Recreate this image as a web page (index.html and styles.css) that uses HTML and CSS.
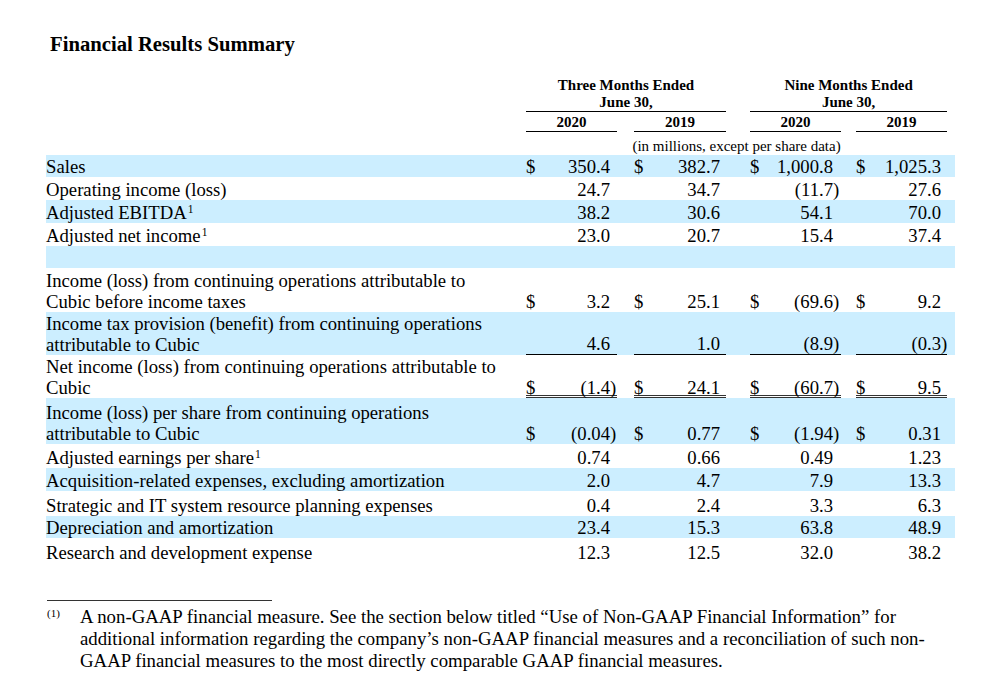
FILE: index.html
```html
<!DOCTYPE html>
<html lang="en">
<head>
<meta charset="utf-8">
<title>Financial Results Summary</title>
<link rel="stylesheet" href="styles.css">
</head>
<body>
<div class="page">
  <h1 class="title">Financial Results Summary</h1>
  <table class="fin">
    <colgroup>
      <col class="w-label">
      <col class="w-dol"><col class="w-n1"><col class="w-p7">
      <col class="w-g1">
      <col class="w-dol"><col class="w-n2"><col class="w-p6">
      <col class="w-g2">
      <col class="w-dol"><col class="w-n3"><col class="w-p8">
      <col class="w-g3">
      <col class="w-dol"><col class="w-n4"><col class="w-p6">
      <col class="w-end">
    </colgroup>
    <thead>
      <tr class="h-a">
        <th></th>
        <th colspan="7" class="hd ul">Three Months Ended<br>June 30,</th>
        <th></th>
        <th colspan="7" class="hd ul">Nine Months Ended<br>June 30,</th>
        <th></th>
      </tr>
      <tr class="h-b">
        <th></th>
        <th colspan="3" class="hd ul">2020</th>
        <th></th>
        <th colspan="3" class="hd ul">2019</th>
        <th></th>
        <th colspan="3" class="hd ul">2020</th>
        <th></th>
        <th colspan="3" class="hd ul">2019</th>
        <th></th>
      </tr>
      <tr class="h-c">
        <th></th>
        <th colspan="15" class="unit">(in millions, except per share data)</th>
        <th></th>
      </tr>
    </thead>
    <tbody>
      <tr class="band r22">
        <td class="lbl">Sales</td>
        <td class="dol">$</td><td class="num">350.4</td><td class="par"></td><td></td>
        <td class="dol">$</td><td class="num">382.7</td><td class="par"></td><td></td>
        <td class="dol">$</td><td class="num">1,000.8</td><td class="par"></td><td></td>
        <td class="dol">$</td><td class="num">1,025.3</td><td class="par"></td><td></td>
      </tr>
      <tr class="r23">
        <td class="lbl">Operating income (loss)</td>
        <td class="dol"></td><td class="num">24.7</td><td class="par"></td><td></td>
        <td class="dol"></td><td class="num">34.7</td><td class="par"></td><td></td>
        <td class="dol"></td><td class="num">(11.7</td><td class="par">)</td><td></td>
        <td class="dol"></td><td class="num">27.6</td><td class="par"></td><td></td>
      </tr>
      <tr class="band r23">
        <td class="lbl">Adjusted EBITDA<sup class="fn">1</sup></td>
        <td class="dol"></td><td class="num">38.2</td><td class="par"></td><td></td>
        <td class="dol"></td><td class="num">30.6</td><td class="par"></td><td></td>
        <td class="dol"></td><td class="num">54.1</td><td class="par"></td><td></td>
        <td class="dol"></td><td class="num">70.0</td><td class="par"></td><td></td>
      </tr>
      <tr class="r23">
        <td class="lbl">Adjusted net income<sup class="fn">1</sup></td>
        <td class="dol"></td><td class="num">23.0</td><td class="par"></td><td></td>
        <td class="dol"></td><td class="num">20.7</td><td class="par"></td><td></td>
        <td class="dol"></td><td class="num">15.4</td><td class="par"></td><td></td>
        <td class="dol"></td><td class="num">37.4</td><td class="par"></td><td></td>
      </tr>
      <tr class="band r22">
        <td class="lbl"></td>
        <td colspan="16"></td>
      </tr>
      <tr class="r44">
        <td class="lbl">Income (loss) from continuing operations attributable to<br>Cubic before income taxes</td>
        <td class="dol">$</td><td class="num">3.2</td><td class="par"></td><td></td>
        <td class="dol">$</td><td class="num">25.1</td><td class="par"></td><td></td>
        <td class="dol">$</td><td class="num">(69.6</td><td class="par">)</td><td></td>
        <td class="dol">$</td><td class="num">9.2</td><td class="par"></td><td></td>
      </tr>
      <tr class="band r43">
        <td class="lbl">Income tax provision (benefit) from continuing operations<br>attributable to Cubic</td>
        <td class="dol u1"></td><td class="num u1">4.6</td><td class="par u1"></td><td></td>
        <td class="dol u1"></td><td class="num u1">1.0</td><td class="par u1"></td><td></td>
        <td class="dol u1"></td><td class="num u1">(8.9</td><td class="par u1">)</td><td></td>
        <td class="dol u1"></td><td class="num u1">(0.3</td><td class="par u1">)</td><td></td>
      </tr>
      <tr class="r43">
        <td class="lbl">Net income (loss) from continuing operations attributable to<br>Cubic</td>
        <td class="dol u2">$</td><td class="num u2">(1.4</td><td class="par u2">)</td><td></td>
        <td class="dol u2">$</td><td class="num u2">24.1</td><td class="par u2"></td><td></td>
        <td class="dol u2">$</td><td class="num u2">(60.7</td><td class="par u2">)</td><td></td>
        <td class="dol u2">$</td><td class="num u2">9.5</td><td class="par u2"></td><td></td>
      </tr>
      <tr class="band r46">
        <td class="lbl">Income (loss) per share from continuing operations<br>attributable to Cubic</td>
        <td class="dol">$</td><td class="num">(0.04</td><td class="par">)</td><td></td>
        <td class="dol">$</td><td class="num">0.77</td><td class="par"></td><td></td>
        <td class="dol">$</td><td class="num">(1.94</td><td class="par">)</td><td></td>
        <td class="dol">$</td><td class="num">0.31</td><td class="par"></td><td></td>
      </tr>
      <tr class="r24">
        <td class="lbl">Adjusted earnings per share<sup class="fn">1</sup></td>
        <td class="dol"></td><td class="num">0.74</td><td class="par"></td><td></td>
        <td class="dol"></td><td class="num">0.66</td><td class="par"></td><td></td>
        <td class="dol"></td><td class="num">0.49</td><td class="par"></td><td></td>
        <td class="dol"></td><td class="num">1.23</td><td class="par"></td><td></td>
      </tr>
      <tr class="band r23">
        <td class="lbl">Acquisition-related expenses, excluding amortization</td>
        <td class="dol"></td><td class="num">2.0</td><td class="par"></td><td></td>
        <td class="dol"></td><td class="num">4.7</td><td class="par"></td><td></td>
        <td class="dol"></td><td class="num">7.9</td><td class="par"></td><td></td>
        <td class="dol"></td><td class="num">13.3</td><td class="par"></td><td></td>
      </tr>
      <tr class="r25">
        <td class="lbl">Strategic and IT system resource planning expenses</td>
        <td class="dol"></td><td class="num">0.4</td><td class="par"></td><td></td>
        <td class="dol"></td><td class="num">2.4</td><td class="par"></td><td></td>
        <td class="dol"></td><td class="num">3.3</td><td class="par"></td><td></td>
        <td class="dol"></td><td class="num">6.3</td><td class="par"></td><td></td>
      </tr>
      <tr class="band r22">
        <td class="lbl">Depreciation and amortization</td>
        <td class="dol"></td><td class="num">23.4</td><td class="par"></td><td></td>
        <td class="dol"></td><td class="num">15.3</td><td class="par"></td><td></td>
        <td class="dol"></td><td class="num">63.8</td><td class="par"></td><td></td>
        <td class="dol"></td><td class="num">48.9</td><td class="par"></td><td></td>
      </tr>
      <tr class="r25">
        <td class="lbl">Research and development expense</td>
        <td class="dol"></td><td class="num">12.3</td><td class="par"></td><td></td>
        <td class="dol"></td><td class="num">12.5</td><td class="par"></td><td></td>
        <td class="dol"></td><td class="num">32.0</td><td class="par"></td><td></td>
        <td class="dol"></td><td class="num">38.2</td><td class="par"></td><td></td>
      </tr>
    </tbody>
  </table>

  <div class="notes">
    <hr class="rule">
    <div class="note">
      <span class="mark">(1)</span>
      <p class="note-text">A non-GAAP financial measure. See the section below titled “Use of Non-GAAP Financial Information” for<br>additional information regarding the company’s non-GAAP financial measures and a reconciliation of such non-<br>GAAP financial measures to the most directly comparable GAAP financial measures.</p>
    </div>
  </div>
</div>
</body>
</html>
```

FILE: styles.css
```css
html, body {
  margin: 0;
  padding: 0;
  background: #ffffff;
}

body {
  font-family: "Liberation Serif", "Times New Roman", Times, serif;
  color: #000000;
}

.page {
  width: 909px;
  padding: 32px 0 0 46px;
}

.title {
  margin: 0 0 21px 0;
  padding-left: 4px;
  font-size: 20.7px;
  line-height: 24px;
  font-weight: bold;
}

.fin {
  width: 909px;
  table-layout: fixed;
  border-collapse: separate;
  border-spacing: 0;
  font-size: 18.7px;
}

.w-label { width: 480px; }
.w-dol { width: 20px; }
.w-n1 { width: 64px; }
.w-n2 { width: 66px; }
.w-n3 { width: 63px; }
.w-n4 { width: 65px; }
.w-p6 { width: 6px; }
.w-p7 { width: 7px; }
.w-p8 { width: 8px; }
.w-g1 { width: 17px; }
.w-g2 { width: 24px; }
.w-g3 { width: 15px; }
.w-end { width: 8px; }

.fin th,
.fin td {
  padding: 0;
  vertical-align: bottom;
  white-space: nowrap;
}

.hd {
  font-size: 15px;
  line-height: 17px;
  font-weight: bold;
  text-align: center;
}

.ul {
  border-bottom: 1px solid #000000;
}

.h-a { height: 35px; }
.h-b { height: 20px; }
.h-c { height: 23px; }

.unit {
  font-size: 15px;
  line-height: 17px;
  font-weight: normal;
  text-align: center;
}

.fin td {
  line-height: 21px;
}

.band td {
  background: #cceeff;
}

.lbl {
  padding-left: 1px;
  text-align: left;
}

.dol {
  text-align: left;
  padding-left: 1px;
}

.num {
  text-align: right;
}

.par {
  text-align: left;
}

.r22 { height: 22px; }
.r23 { height: 23px; }
.r24 { height: 24px; }
.r25 { height: 25px; }
.r43 { height: 43px; }
.r44 { height: 44px; }
.r46 { height: 46px; }

.u1 {
  border-bottom: 1px solid #000000;
}

.fin td.u2 {
  border-bottom: 3px double #333333;
  line-height: 15px;
}

.fn {
  font-size: 11.5px;
  line-height: 0;
  vertical-align: 6px;
  margin-left: 1px;
}

.notes {
  padding-top: 37px;
}

.rule {
  width: 225px;
  margin: 0 0 0 1px;
  border: 0;
  border-top: 1px solid #333333;
  height: 0;
}

.note {
  display: flex;
  padding-top: 5px;
}

.mark {
  width: 33px;
  padding-left: 1px;
  font-size: 11px;
  line-height: 14px;
  flex: none;
}

.note-text {
  margin: 0;
  font-size: 18.8px;
  line-height: 22px;
  white-space: nowrap;
}
```
